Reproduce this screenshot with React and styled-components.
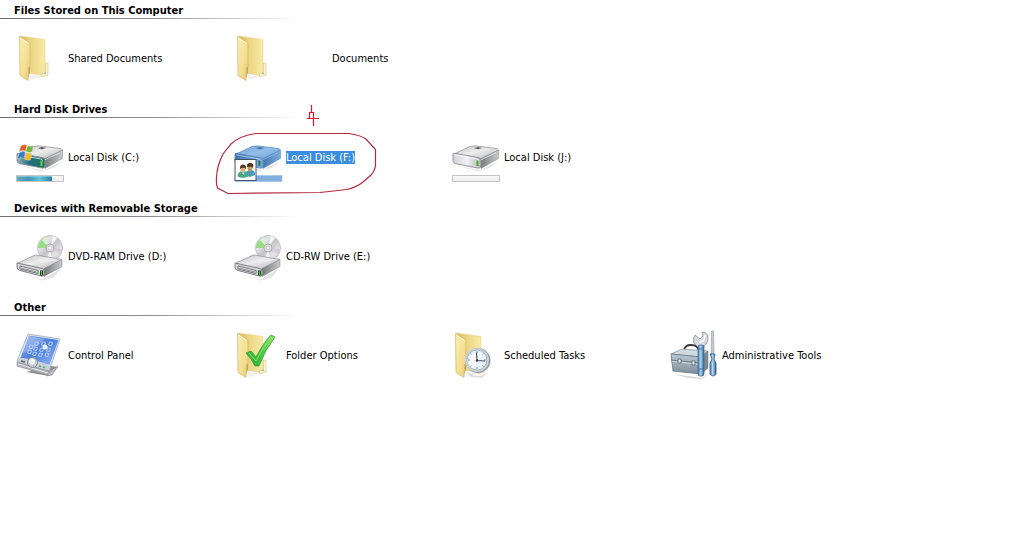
import React from "react";
import styled, { createGlobalStyle } from "styled-components";

const GlobalStyle = createGlobalStyle`
  * { box-sizing: border-box; }
  body {
    margin: 0;
    background: #fff;
    color: #000;
    font-family: "DejaVu Sans Condensed", "DejaVu Sans", "Noto Sans", sans-serif;
    font-size: 11px;
    line-height: 16px;
  }
`;

const Page = styled.main`
  min-height: 100vh;
  overflow: hidden;
`;

const Group = styled.section`
  display: flex;
  flex-direction: column;
  padding-bottom: 17px;
`;

const GroupTitle = styled.h2`
  margin: 0;
  padding: 3px 14px 0;
  font-size: 11px;
  line-height: 15px;
  font-weight: bold;
`;

const Rule = styled.div`
  height: 1px;
  max-width: 300px;
  background: linear-gradient(to right, #6e6e72, #8c8c90 50%, #ffffff);
`;

const Tiles = styled.div`
  display: grid;
  grid-template-columns: repeat(auto-fill, 218px);
  padding: 15px 16px 0;
`;

const Tile = styled.button`
  position: relative;
  display: flex;
  align-items: center;
  gap: 4px;
  height: 48px;
  padding: 0;
  border: 0;
  background: none;
  color: inherit;
  font: inherit;
  text-align: left;
  cursor: default;
`;

const Icon = styled.svg`
  flex: none;
  width: 48px;
  height: 48px;
  overflow: visible;
`;

const Label = styled.span`
  margin-left: ${(p) => (p.$indent ? "46px" : "0")};
  line-height: 13px;
  white-space: nowrap;
  background: ${(p) => (p.$selected ? "#3b8de0" : "transparent")};
  color: ${(p) => (p.$selected ? "#fff" : "inherit")};
`;

const Markup = styled.svg`
  position: absolute;
  left: -20px;
  top: -30px;
  width: 164px;
  height: 94px;
  pointer-events: none;
`;

const GradientDefs = styled.svg`
  position: absolute;
  width: 0;
  height: 0;
`;

function Gradients() {
  return (
    <GradientDefs aria-hidden="true">
      <defs>
        <linearGradient id="flap" x1="0" x2="1" y1="0" y2="1">
          <stop offset="0" stopColor="#fbf0b6" />
          <stop offset=".6" stopColor="#f4de90" />
          <stop offset="1" stopColor="#ecc978" />
        </linearGradient>
        <linearGradient id="leaf" x1="0" x2="1">
          <stop offset="0" stopColor="#d9b860" />
          <stop offset=".45" stopColor="#ecd683" />
          <stop offset="1" stopColor="#f8eaa8" />
        </linearGradient>
        <linearGradient id="greyTop" x1="0" x2="1" y1="0" y2="1">
          <stop offset="0" stopColor="#b9b9bb" />
          <stop offset=".45" stopColor="#ededee" />
          <stop offset="1" stopColor="#b4b4b7" />
        </linearGradient>
        <linearGradient id="greySide" x1="0" x2="1">
          <stop offset="0" stopColor="#77787b" />
          <stop offset="1" stopColor="#c8c9cb" />
        </linearGradient>
        <linearGradient id="greyFront" x1="0" x2="1">
          <stop offset="0" stopColor="#d2d2d6" />
          <stop offset=".5" stopColor="#f0f0f5" />
          <stop offset="1" stopColor="#b5b5b9" />
        </linearGradient>
        <linearGradient id="tealFront" x1="0" x2="1">
          <stop offset="0" stopColor="#9ab4bc" />
          <stop offset=".45" stopColor="#1f6c80" />
          <stop offset="1" stopColor="#217562" />
        </linearGradient>
        <linearGradient id="blueTop" x1="0" x2="1" y1="0" y2="1">
          <stop offset="0" stopColor="#6fa0d4" />
          <stop offset=".5" stopColor="#92bfe9" />
          <stop offset="1" stopColor="#6c9fd6" />
        </linearGradient>
        <linearGradient id="blueSide" x1="0" x2="1">
          <stop offset="0" stopColor="#4474ac" />
          <stop offset="1" stopColor="#7daade" />
        </linearGradient>
        <linearGradient id="usedBar" x1="0" x2="1">
          <stop offset="0" stopColor="#62a9bf" />
          <stop offset=".35" stopColor="#4396b4" />
          <stop offset=".65" stopColor="#64c4dc" />
          <stop offset="1" stopColor="#287f9c" />
        </linearGradient>
        <linearGradient id="disc" x1="0" x2="1" y1="0" y2="1">
          <stop offset="0" stopColor="#bfc0c3" />
          <stop offset=".3" stopColor="#e4e4e6" />
          <stop offset=".5" stopColor="#c4c3c8" />
          <stop offset=".75" stopColor="#e6e6e8" />
          <stop offset="1" stopColor="#b5b6b9" />
        </linearGradient>
        <linearGradient id="screen" x1="0" x2="1" y1="0" y2="1">
          <stop offset="0" stopColor="#8fb0ee" />
          <stop offset=".5" stopColor="#4f7fdd" />
          <stop offset="1" stopColor="#98c0f7" />
        </linearGradient>
        <linearGradient id="tick" x1="1" x2="0" y1="0" y2="1">
          <stop offset="0" stopColor="#8fdf68" />
          <stop offset=".5" stopColor="#4ccb43" />
          <stop offset="1" stopColor="#28a832" />
        </linearGradient>
        <linearGradient id="box" x1="0" x2="0" y1="0" y2="1">
          <stop offset="0" stopColor="#bcc9d2" />
          <stop offset="1" stopColor="#7d8d99" />
        </linearGradient>
        <linearGradient id="handle" x1="0" x2="1">
          <stop offset="0" stopColor="#4b7eb4" />
          <stop offset=".45" stopColor="#a9d2f2" />
          <stop offset="1" stopColor="#355f91" />
        </linearGradient>
      </defs>
    </GradientDefs>
  );
}

function FolderShape() {
  return (
    <g>
      <path d="m11 41 18 1-14 4Z" fill="#998" opacity=".15" />
      <path d="M4 2 29 5.500V42L12 39Z" fill="url(#leaf)" stroke="#e9d48a" strokeWidth=".6" />
      <path d="M29.500 29h2.500v12l-6 2-1-3 4.500-1Z" fill="#fbf4cc" stroke="#d6c482" strokeWidth=".6" />
      <path d="m28 39 2 .5" stroke="#8fbcd8" strokeWidth="1.500" />
      <path d="M14 11v28l-2 5V10Z" fill="#a88a48" opacity=".6" />
      <path d="M3.500 2.500 12.500 8q1.500 1 1.500 3v21l-1.500 2-.5 12.500L4 41.500Z" fill="url(#flap)" stroke="#d3b86a" strokeWidth=".7" />
      <path d="m4.500 4 8 5.500" stroke="#fffbdc" />
    </g>
  );
}

function DriveShape({ kind }) {
  const blue = kind === "blue";
  const front = kind === "teal" ? "url(#tealFront)" : blue ? "url(#blueSide)" : "url(#greyFront)";
  const edge = blue ? "#5e8cc2" : "#909194";
  return (
    <g strokeLinejoin="round" transform="translate(0 3) scale(1 .88)">
      <path d="m5 34 23 5 18-10-8 7-12 4Z" fill="#777" opacity=".22" />
      <path d="M1 21 18 12q3-1 6-.7L43 14q3 .5 3.500 2L28 27Z" fill={blue ? "url(#blueTop)" : "url(#greyTop)"} stroke={edge} strokeWidth=".8" />
      <path d="m28 26 18.500-10v9.500L29 37Z" fill={blue ? "url(#blueSide)" : "url(#greySide)"} stroke={edge} strokeWidth=".6" />
      <path d="M1 20.500q0-1 2-.8L26 24.500q3 .5 3 3v6.500q0 3-3 2.500L4 31.500q-3-.8-3-3Z" fill={front} stroke={edge} />
      <path d="m2.500 21.500 22 4.500q2 .5 2 2" fill="none" stroke={blue ? "#a8cff5" : "#fff"} opacity=".8" />
      <path d="M25.500 28v6" stroke={kind === "teal" ? "#67d34e" : blue ? "#12833c" : "#45a928"} strokeWidth="2" />
      <path d="m22 14 4-1.500 4 1-4 1.500Z" fill={blue ? "#3f6fa8" : "#5b5b5e"} />
      <path d="m29 27 15-8" stroke={blue ? "#9cc8f3" : "#f7f7f7"} opacity=".7" />
    </g>
  );
}

function Capacity({ used, selected }) {
  if (selected) return <path d="M1 42.500h47v6H1Z" fill="#82aede" stroke="#9cc0e8" strokeWidth=".6" />;
  return (
    <g>
      <path d="M.5 42.500h47v6H.5Z" fill="#f1f1f1" stroke="#c4c4c4" />
      <path d="M1 44h46" stroke="#fff" />
      {used > 0 && <rect x="1" y="43" width={used} height="5" fill="url(#usedBar)" />}
      {used > 0 && <path d={`M1 43.500h${used}`} stroke="#9fd5e4" opacity=".6" />}
    </g>
  );
}

function WindowsFlag() {
  return (
    <g stroke="#fff" strokeWidth=".3">
      <path d="M4.500 13.500q3-3 6.500-1.300L9.500 18Q6 16.500 3 19Z" fill="#e0602a" />
      <path d="M11.500 12.500q3 1.500 6 0l-1.500 6.500q-3 1-6-.5Z" fill="#72b83c" />
      <path d="M3 20q3-2.500 6.500-.8L8 25.500Q5 23.500 1.500 26Z" fill="#337fcd" />
      <path d="M10 19.500q3 1.500 6 .3L14.500 27q-3 1-6-.7Z" fill="#f4b629" />
    </g>
  );
}

function SharedBadge() {
  return (
    <g>
      <rect x="1" y="26.500" width="21" height="21" fill="#fff" stroke="#41566a" strokeWidth="1" />
      <path d="M11.500 42q0-5 5-5t4.500 5l-5 2Z" fill="#4d9cba" />
      <path d="M3.500 43.500q0-5.500 5.500-5.500t5.500 5.500q-6 2.500-11 0Z" fill="#4ba587" />
      <ellipse cx="16" cy="34.500" rx="2.500" ry="3.200" fill="#c9965d" />
      <path d="M13 34q-.5-4 3-4 4.500 0 3 5-1-2.500-6-1Z" fill="#4c3622" />
      <ellipse cx="9" cy="36" rx="2.500" ry="3.200" fill="#dfb27c" />
      <path d="M6 36q-.5-4.500 3-4.500 4 0 2.800 4.500-2-2.500-5.800 0Z" fill="#5b3f22" />
      <path d="m8 39.500 1.500 2.500 1-2.500Z" fill="#fff" />
    </g>
  );
}

function OpticalShape() {
  return (
    <g strokeLinejoin="round" transform="translate(0 1.500)">
      <circle cx="34" cy="14.500" r="12.500" fill="url(#disc)" stroke="#b9babd" strokeWidth=".8" />
      <g transform="translate(0 -1.500)">
        <path d="m34 16-12 0q0-5 4-8Z" fill="#9adb86" />
        <path d="m34 16-8-8 4-4Z" fill="#d7efcf" />
        <path d="m34 16 3-12 4 2Z" fill="#fff" opacity=".8" />
        <path d="m34 16 12 1-1 5Z" fill="#d7c7dd" />
        <path d="m34 16 2 12-5 0Z" fill="#fff" opacity=".7" />
        <circle cx="34" cy="16" r="4" fill="#ddd" stroke="#a4a4a7" strokeWidth=".7" />
        <circle cx="34" cy="16" r="2" fill="#fff" stroke="#aaa" strokeWidth=".5" />
      </g>
      <path d="m3 39 23 7 19-11-7 9-12 3Z" fill="#777" opacity=".2" />
      <path d="m1 30 17-8q2-1 5 0l23 4-18 10Z" fill="url(#greyTop)" stroke="#929397" strokeWidth=".7" />
      <path d="m28 35 18-9v7L28 43Z" fill="url(#greySide)" stroke="#909195" strokeWidth=".6" />
      <path d="M1 29.500 26 35q2 .5 2 3v2.500q0 3-3 2L4 37q-3-1-3-3Z" fill="#d6d6d9" stroke="#77787b" strokeWidth=".9" />
      <path d="m4 32.500 18 4.500v3L4 35.500Z" fill="#f9f9f9" stroke="#66676b" strokeWidth=".9" />
      <path d="m5 34.500 16 4" stroke="#707174" strokeWidth=".8" />
      <path d="M25.500 37v5" stroke="#183d18" strokeWidth="3" />
      <path d="M25.500 37.500v4" stroke="#52bd36" strokeWidth="1.300" />
      <path d="m24 29 16-3" stroke="#fff" opacity=".6" />
    </g>
  );
}

function ControlPanelShape() {
  return (
    <g strokeLinejoin="round">
      <path d="m10 41 23 4 9-9-7-1Z" fill="#8d8e92" />
      <path d="m32 41 10-6-6 9-5 1Z" fill="#b6b7ba" stroke="#808185" strokeWidth=".5" />
      <path d="M12 3 44 8 33 40 1 30Z" fill="#dce7f4" stroke="#9ca8b8" strokeWidth=".8" />
      <path d="M13 4.500 42.500 9 33.500 34 4.500 27Z" fill="url(#screen)" />
      <path d="m13 5 15 3Q20 19 6 22Z" fill="#fff" opacity=".22" />
      <g fill="none" stroke="#b5cffa" strokeWidth="1">
        <path d="m14 14 3 .6-1 3-3-.6Zm-1.500 5 3 .6-1 3-3-.6Zm7-8 3 .6-1 3-3-.6Zm-1 5 3 .6-1 3-3-.6Zm-1 5 3 .6-1 3-3-.6Zm9-10 3 .6-1 3-3-.6Zm-2 6 3 .6-1 3-3-.6Zm-1 5 3 .6-1 3-3-.6Zm10-11 3 .6-1 3-3-.6Zm-2 6 3 .6-1 3-3-.6Zm-1.500 5 3 .6-1 3-3-.6Z" />
      </g>
      <circle cx="29" cy="16" r="2.500" fill="#e7f4ff" />
      <path d="M3 27q14 0 31 8l-2 6Q20 35 1 33Z" fill="#ccd0d5" />
      <path d="m1 31 32 9-2 4L1 35Z" fill="#aeb1b6" stroke="#888b90" strokeWidth=".6" />
      <path d="m2 33 30 9" stroke="#ececee" />
      <circle cx="16.500" cy="31.500" r="5" fill="#c9ccd1" stroke="#80858d" strokeWidth=".9" />
      <circle cx="16" cy="30.500" r="3" fill="#f6f7f8" />
      <path d="m5 30 4 1" stroke="#60656e" strokeWidth="1.300" />
      <path d="m23 35 2 .5m2 .5 2 .5" stroke="#42aa79" strokeWidth="1.800" />
    </g>
  );
}

function ClockShape() {
  return (
    <g>
      <path d="M12 36q5 10 17 9l8-5-7 7-11-1Z" fill="#777" opacity=".25" />
      <circle cx="26" cy="29.500" r="12.500" fill="#8f98a2" />
      <circle cx="25" cy="29" r="12" fill="#c7d0d8" />
      <circle cx="25" cy="29" r="10" fill="#e8f1f8" stroke="#adb9c3" />
      <path d="M15.500 29q5-10 16-6L20 37.500q-4.500-3-4.500-8.500Z" fill="#fff" opacity=".6" />
      <g stroke="#8a9aa8" strokeWidth="1">
        <path d="M25 20v2m0 14v2M16 29h2m14 0h2M18.500 22.500l1 1m11 11 1 1m0-13-1 1m-11 11-1 1" />
      </g>
      <path d="m24.500 21.500.5 8 8 .5" fill="none" stroke="#48525d" strokeWidth="1.200" />
      <circle cx="25" cy="29.500" r="1.200" fill="#2c3848" />
    </g>
  );
}

function ToolboxShape() {
  return (
    <g strokeLinejoin="round">
      <path d="m3 43 29 4 8-5-8 6-14-1Z" fill="#777" opacity=".3" />
      <path d="M14 19q1-5 7-5 7 0 8 6" fill="none" stroke="#34383c" strokeWidth="1.800" />
      <path d="M1 23 12 18l26 2-7 6Z" fill="#d0d9df" stroke="#84919b" strokeWidth=".7" />
      <path d="m1 23 30 3v17L3 40Z" fill="url(#box)" stroke="#687782" strokeWidth=".8" />
      <path d="m31 26 7-6v17l-7 6Z" fill="#7b8a95" stroke="#667580" strokeWidth=".5" />
      <path d="m1 29 30 3" stroke="#62717c" strokeWidth=".8" />
      <path d="m2 30.500 29 3" stroke="#dce4e9" strokeWidth=".7" />
      <path d="M8 28h3v4H8Zm14 2h3v4h-3Z" fill="#eceff1" stroke="#54616b" strokeWidth=".8" />
      <path d="m28 16-4-4q-2-4 1-8l5 4 3-3-1-4q5 0 6 5t-3 8l-2 3h-4Z" fill="#d8dadd" stroke="#898f96" strokeWidth=".8" />
      <path d="M29 11q6 0 6-7" fill="none" stroke="#fff" strokeWidth="1.500" />
      <rect x="28" y="14" width="6" height="31" rx="2" fill="url(#handle)" stroke="#3b658b" strokeWidth=".7" />
      <path d="M28 18h6m-6 20h6" stroke="#4472a0" />
      <path d="M41.500 0h2l.5 24h-3Z" fill="#c4c8cc" stroke="#979da3" strokeWidth=".6" />
      <path d="M40 23h5l-1 5 2 4v11q-3 4-6 0V32l2-4Z" fill="url(#handle)" stroke="#31598a" strokeWidth=".8" />
      <path d="M42.500 32v11" stroke="#c0e0fa" strokeWidth=".8" />
    </g>
  );
}

const icons = {
  folder: <FolderShape />,
  driveC: <><DriveShape kind="teal" /><WindowsFlag /><Capacity used={35} /></>,
  driveF: <><DriveShape kind="blue" /><Capacity selected /><SharedBadge /></>,
  driveJ: <><DriveShape kind="grey" /><Capacity used={0} /></>,
  optical: <OpticalShape />,
  control: <ControlPanelShape />,
  options: (
    <>
      <FolderShape />
      <path d="m12 22 5-2 5 6Q30 11 37 4l4 2Q31 19 25 35h-4Q17 27 12 22Z" fill="url(#tick)" stroke="#34a437" strokeWidth=".8" strokeLinejoin="round" />
      <path d="m15 22 7 8Q29 15 38 6" fill="none" stroke="#a8ea8e" strokeWidth=".7" />
    </>
  ),
  tasks: <><FolderShape /><ClockShape /></>,
  tools: <ToolboxShape />,
};

const groups = [
  {
    title: "Files Stored on This Computer",
    items: [
      { name: "Shared Documents", icon: "folder" },
      { name: "Documents", icon: "folder", indent: true },
    ],
  },
  {
    title: "Hard Disk Drives",
    items: [
      { name: "Local Disk (C:)", icon: "driveC" },
      { name: "Local Disk (F:)", icon: "driveF", selected: true },
      { name: "Local Disk (J:)", icon: "driveJ" },
    ],
  },
  {
    title: "Devices with Removable Storage",
    items: [
      { name: "DVD-RAM Drive (D:)", icon: "optical" },
      { name: "CD-RW Drive (E:)", icon: "optical" },
    ],
  },
  {
    title: "Other",
    items: [
      { name: "Control Panel", icon: "control" },
      { name: "Folder Options", icon: "options" },
      { name: "Scheduled Tasks", icon: "tasks" },
      { name: "Administrative Tools", icon: "tools" },
    ],
  },
];

function HandDrawnMark() {
  return (
    <Markup viewBox="214 103 164 94" fill="none" aria-hidden="true">
      <path
        d="M256 133.500H349Q360 135 366 139L375.500 149.500V165Q375 171 371 175L363 182Q357 187 347 189.500L320 192.500 228 193.500 217.500 188Q216 185 216.500 177 217 166 223 154L231 144Q239 136 256 133.500Z"
        stroke="#b3283c"
        strokeWidth="1.200"
      />
      <path d="M311.500 105v8M309.500 119v-6.500h4V126M307 118.500h12" stroke="#dc1a2c" strokeWidth="1.200" />
    </Markup>
  );
}

export default function App() {
  return (
    <>
      <GlobalStyle />
      <Gradients />
      <Page>
        {groups.map((group) => (
          <Group key={group.title}>
            <GroupTitle>{group.title}</GroupTitle>
            <Rule />
            <Tiles>
              {group.items.map((item) => (
                <Tile key={item.name} type="button">
                  <Icon viewBox="0 0 48 48" aria-hidden="true">{icons[item.icon]}</Icon>
                  <Label $selected={item.selected} $indent={item.indent}>{item.name}</Label>
                  {item.selected && <HandDrawnMark />}
                </Tile>
              ))}
            </Tiles>
          </Group>
        ))}
      </Page>
    </>
  );
}
